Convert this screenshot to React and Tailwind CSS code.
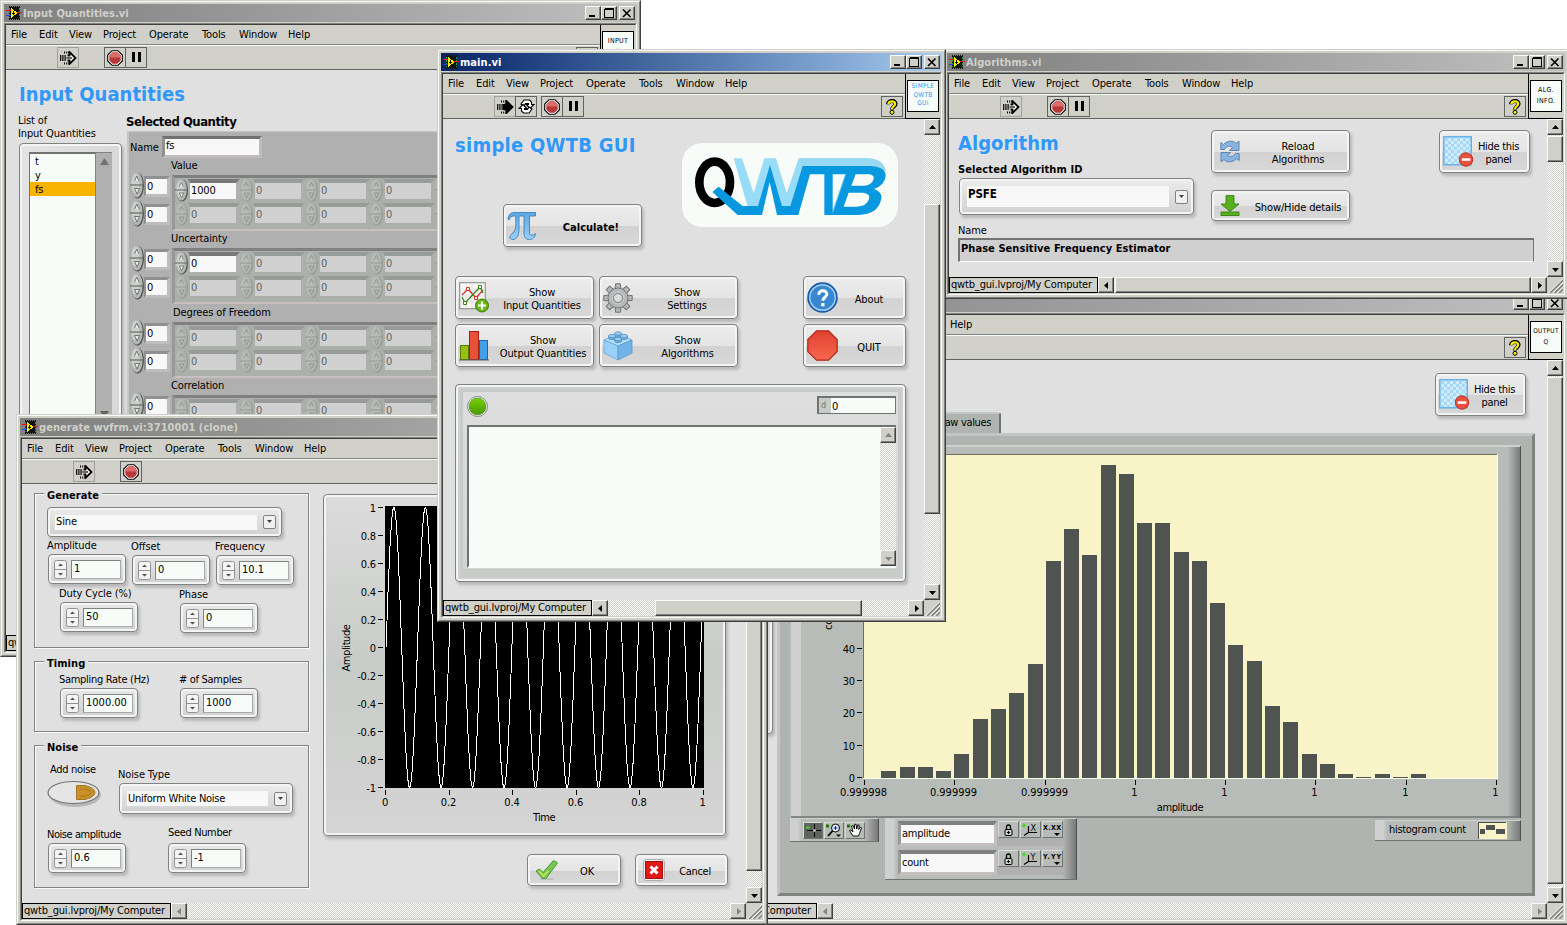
import React from "react";

const cx = (...c) => c.filter(Boolean).join(" ");

/* ---------- icons ---------- */

function ViIcon() {
  return (
    <svg width="16" height="14" viewBox="0 0 16 14" shapeRendering="crispEdges" className="shrink-0">
      <rect x="3" y="1" width="11" height="12" fill="#101410" />
      <path d="M3 .5H14M3 13.500H14" stroke="#101410" strokeDasharray="1 1" />
      <path d="M3.500 2V12M13.500 2V12" stroke="#20a040" strokeDasharray="2 1" />
      <path d="M0 4.500H5" stroke="#f01010" strokeWidth="1" />
      <path d="M0 9.500H5" stroke="#2040f0" strokeWidth="1" />
      <path d="M11 6.500H16" stroke="#f01010" strokeWidth="1" />
      <path d="M5 2L12 7L5 12Z" fill="#f8f000" />
      <path d="M7.500 5V9M6 7.500H9" stroke="#101010" strokeWidth="1" />
    </svg>
  );
}

function RunIcon({ solid }) {
  return (
    <svg width="17" height="14" viewBox="0 0 17 14">
      <path d="M7.500 4.500H9.500V1L15.500 7L9.500 13V9.500H7.500" fill={solid ? "#000" : "#fff"} stroke="#000" strokeWidth="1.800" />
      {solid && <path d="M6 4h5v6h-5z" />}
      {!solid && <path d="M6.500 7H12" stroke="#000" strokeWidth="1.200" />}
      <path d="M.7 4V10M2.900 4V10M5.100 4V10" stroke="#000" strokeWidth="1.200" />
      <path d="M4.500 .5v2M6.700 .5v2M8.800 .5v2M4.500 11.500v2M6.700 11.500v2M8.800 11.500v2" stroke="#000" strokeWidth="1" />
    </svg>
  );
}

function LoopIcon() {
  return (
    <svg width="17" height="15" viewBox="0 0 17 15">
      <g fill="#fff" stroke="#000" strokeWidth="1.100">
        <path d="M3 5L6 1H11.500L13.500 3V5.500H16L12 9.500L8.200 5.500H10.500V4.500H7.500L6 7Z" />
        <path d="M14 10L11 14H5.500L3.500 12V9.500H1L5 5.500L8.800 9.500H6.500V10.500H9.500L11 8Z" />
      </g>
    </svg>
  );
}

function StopIcon() {
  return (
    <svg width="16" height="16" viewBox="0 0 16 16">
      <path d="M5 .7H11L15.300 5V11L11 15.300H5L.7 11V5Z" fill="#fff" stroke="#000" strokeWidth="1.100" />
      <path d="M5.600 2.300H10.400L13.700 5.600V10.400L10.400 13.700H5.600L2.300 10.400V5.600Z" fill="#b83838" />
      <path d="M5.600 2.600H10.400L13.200 5.600V7.500H2.800V5.600Z" fill="#dc6c68" />
    </svg>
  );
}

function PauseIcon() {
  return (
    <svg width="11" height="11" viewBox="0 0 11 11" shapeRendering="crispEdges">
      <path d="M1 0h3v10h-3zM7 0h3v10h-3z" fill="#000" />
    </svg>
  );
}

function HelpIcon() {
  return (
    <svg width="12" height="16" viewBox="0 0 12 16">
      <path d="M2 5.200C2 0.900 9.600 .9 9.600 4.800C9.600 7.600 6 7.400 6 10.500" fill="none" stroke="#000" strokeWidth="4" />
      <path d="M2.400 5C2.600 1.500 9.200 1.500 9.200 4.800C9.200 7.200 6 7.400 6 10.200" fill="none" stroke="#f8f000" strokeWidth="2.200" />
      <circle cx="6" cy="13.300" r="2" fill="#f8f000" stroke="#000" />
    </svg>
  );
}

function PiIcon() {
  return (
    <svg width="30" height="30" viewBox="0 0 30 30">
      <defs>
        <linearGradient id="pi" x1="0" y1="0" x2="0" y2="1">
          <stop offset="0" stopColor="#58a8e8" />
          <stop offset="1" stopColor="#98d0f8" />
        </linearGradient>
      </defs>
      <path
        d="M1 8.500C1.500 3 4 1.500 8 1.500H28.500V5H22.500V21C22.500 25 25 25 28.500 22.500C28 26.500 26 28.500 22.500 28.500C18.500 28.500 17 26 17 22V5H12V18C12 25 9 28.500 6 28.500C4 28.500 2.800 27.500 2.800 26C2.800 24 8.800 21 8.800 15V5H7C4.500 5 3 6 2.500 8.500Z"
        fill="url(#pi)"
        stroke="#3c80b8"
        strokeWidth=".9"
      />
    </svg>
  );
}

function PlotIcon() {
  return (
    <svg width="30" height="31" viewBox="0 0 30 31">
      <rect x=".7" y=".7" width="25.600" height="26" fill="#f8f8f8" stroke="#909490" strokeWidth="1.200" />
      <path d="M7 2V26M13 2V26M19 2V26M2 8H25M2 14H25M2 20H25" stroke="#d4d8d4" strokeWidth=".8" />
      <path d="M3 13L9 7L17 16L24 8" fill="none" stroke="#d83020" strokeWidth="1.300" />
      <path d="M3 15L6 21L21 5L24 11" fill="none" stroke="#388820" strokeWidth="1.300" />
      <path d="M7.500 5.500h3v3h-3zM15.500 14.500h3v3h-3z" fill="#fff" stroke="#d83020" />
      <path d="M4.500 19.500h3v3h-3zM19.500 3.500h3v3h-3z" fill="#fff" stroke="#388820" />
      <circle cx="23" cy="23.500" r="6.500" fill="#68b810" stroke="#387808" />
      <path d="M23 19.500V27.500M19 23.500H27" stroke="#fff" strokeWidth="2.200" />
    </svg>
  );
}

function BarsIcon() {
  return (
    <svg width="30" height="30" viewBox="0 0 30 30">
      <rect x="1.500" y="14.500" width="8" height="14" fill="#98c010" stroke="#587808" />
      <rect x="10.500" y=".5" width="9" height="28" fill="#e85038" stroke="#a82010" />
      <rect x="20.500" y="9.500" width="8" height="19" fill="#40a0e8" stroke="#1868a8" />
      <path d="M0 29H30" stroke="#606460" />
    </svg>
  );
}

function GearIcon() {
  const teeth = [0, 45, 90, 135, 180, 225, 270, 315];
  return (
    <svg width="30" height="30" viewBox="0 0 30 30">
      <g fill="#b4b8b8" stroke="#707474" strokeWidth="1">
        {teeth.map((a) => (
          <path key={a} d="M12 7L12.600 .8H17.400L18 7Z" transform={`rotate(${a} 15 15)`} />
        ))}
        <circle cx="15" cy="15" r="10" />
      </g>
      <circle cx="15" cy="15" r="9.300" fill="#b4b8b8" />
      <circle cx="15" cy="15" r="4.500" fill="#dcdcdc" stroke="#808484" />
      <circle cx="15" cy="15" r="6" fill="none" stroke="#c8cccc" />
    </svg>
  );
}

function BrickIcon() {
  return (
    <svg width="30" height="30" viewBox="0 0 30 30">
      <path d="M1 9L15 3L29 9L15 15Z" fill="#b8e0f8" stroke="#68a8d8" strokeWidth=".8" />
      <path d="M1 9L15 15V29L1 22Z" fill="#98d0f8" stroke="#68a8d8" strokeWidth=".8" />
      <path d="M29 9L15 15V29L29 22Z" fill="#70b4e8" stroke="#5098c8" strokeWidth=".8" />
      {[[15, 2.500], [9, 5], [21, 5], [15, 8]].map(([x, y]) => (
        <g key={`${x}-${y}`} stroke="#5090c8" strokeWidth=".8">
          <path d={`M${x - 3.500} ${y}v2a3.500 1.700 0 0 0 7 0v-2z`} fill="#70b0e0" />
          <ellipse cx={x} cy={y} rx="3.500" ry="1.700" fill="#a0d0f0" />
        </g>
      ))}
    </svg>
  );
}

function AboutIcon() {
  return (
    <svg width="31" height="31" viewBox="0 0 31 31">
      <circle cx="15.500" cy="15.500" r="14.500" fill="#3888d0" stroke="#1858a8" strokeWidth="1.500" />
      <circle cx="15.500" cy="15.500" r="12.700" fill="none" stroke="#b0d8f8" strokeWidth="1.200" />
      <path d="M11.800 12.800C11.800 7.200 20 7.600 19.800 12.200C19.600 15.400 15.800 15.200 15.800 18.800" fill="none" stroke="#fff" strokeWidth="3" />
      <rect x="14.200" y="21" width="3.300" height="3.300" fill="#fff" />
    </svg>
  );
}

function QuitIcon() {
  return (
    <svg width="31" height="31" viewBox="0 0 31 31">
      <defs>
        <linearGradient id="quit" x1="0" y1="0" x2="0" y2="1">
          <stop offset="0" stopColor="#e04030" />
          <stop offset="1" stopColor="#f86850" />
        </linearGradient>
      </defs>
      <path d="M9.500 .8H21.500L30.200 9.500V21.500L21.500 30.200H9.500L.8 21.500V9.500Z" fill="url(#quit)" stroke="#b02818" strokeWidth="1.200" />
    </svg>
  );
}

function ReloadIcon() {
  return (
    <svg width="20" height="23" viewBox="0 0 20 23">
      <g fill="#88b4e0" stroke="#5080b0" strokeWidth=".9">
        <path d="M.8 9.500V2.500L3.500 4.500C7 .5 13 0 16 3.500L19 1V10.500H9.500L12.500 7.500C10 5.500 6.500 6 4.500 9.500Z" />
        <path d="M19.200 13.500V20.500L16.500 18.500C13 22.500 7 23 4 19.500L1 22V12.500H10.500L7.500 15.500C10 17.500 13.500 17 15.500 13.500Z" />
      </g>
    </svg>
  );
}

function DownIcon() {
  return (
    <svg width="20" height="21" viewBox="0 0 20 21">
      <g fill="#58b020" stroke="#388010" strokeWidth=".9">
        <path d="M6 .6H14V9H19L10 16.500L1 9H6Z" />
        <rect x="1" y="17" width="18" height="3.500" />
      </g>
    </svg>
  );
}

function HideIcon() {
  return (
    <svg width="32" height="32" viewBox="0 0 32 32">
      <defs>
        <pattern id="chk" width="6" height="6" patternUnits="userSpaceOnUse" x="2" y="2">
          <rect width="6" height="6" fill="#d0ecfc" />
          <path d="M0 0h3v3h-3zM3 3h3v3h-3z" fill="#a8d8f8" />
        </pattern>
      </defs>
      <rect x=".8" y=".8" width="27.500" height="28" fill="url(#chk)" stroke="#60b0e8" strokeWidth="1.400" />
      <circle cx="23" cy="23.500" r="6.700" fill="#e85040" stroke="#b83020" />
      <rect x="18.700" y="22.300" width="8.600" height="2.500" fill="#fff" />
    </svg>
  );
}

function CheckIcon() {
  return (
    <svg width="24" height="20" viewBox="0 0 24 20">
      <path d="M5 19H18" stroke="#a8aca8" />
      <path d="M1 11L4.500 9L8 12.500L18 1H20L22.500 3L11 18.500H7.500Z" fill="#78c850" stroke="#409030" strokeWidth=".9" />
      <path d="M4 11L8.500 16L13 11" stroke="#d0e860" fill="none" strokeWidth="1.500" />
    </svg>
  );
}

function CancelIcon() {
  return (
    <svg width="22" height="22" viewBox="0 0 22 22">
      <rect x=".5" y=".5" width="21" height="21" rx="2.500" fill="#f0f0f0" stroke="#b0b0b0" />
      <rect x="2.500" y="2.500" width="17" height="17" fill="#e01818" stroke="#a81010" />
      <path d="M7.500 7.500L14.500 14.500M14.500 7.500L7.500 14.500" stroke="#fff" strokeWidth="3" />
    </svg>
  );
}

function Logo() {
  return (
    <svg width="216" height="84" viewBox="738 291 648 252">
      <rect x="738" y="291" width="648" height="252" rx="62" fill="#f8fcf8" />
      <ellipse cx="836" cy="409" rx="46" ry="62" fill="none" stroke="#000" strokeWidth="26" />
      <path d="M893 337H918L953 442L985 337H1020L1052 442L1088 337H1290Q1342 337 1349 375L1300 372H1110L1078 482H1030L1003 398L975 482H935Z" fill="#98dcf8" />
      <path d="M1090 337H1290Q1342 337 1349 375L1300 362H1098Z" fill="#98d8f0" />
      <path
        d="M829 438L848 422L920 480H966L1002 357L1038 480H1063L1100 360H1305Q1350 364 1349 390Q1346 418 1314 429Q1342 440 1335 462Q1325 505 1268 507H1165V385H1122L1087 507H1023L1001 408L978 507H905Z"
        fill="#0898e0"
      />
      <path d="M1190 385H1228L1190 496Z" fill="#f8fcf8" />
      <path d="M1190 500L1229 385" stroke="#98d0f0" strokeWidth="2" />
      <path d="M1259 385H1298Q1318 387 1312 402Q1306 418 1284 419H1246Z" fill="#f8fcf8" />
      <path d="M1238 440H1280Q1304 442 1299 459Q1292 481 1262 482H1223Z" fill="#f8fcf8" />
    </svg>
  );
}

/* ---------- window chrome ---------- */

const raised =
  "border border-t-[#f8fcf8] border-l-[#f8fcf8] border-b-[#404040] border-r-[#404040] shadow-[inset_-1px_-1px_0_#808480] bg-[#d0d0c8]";
const checker = "bg-[repeating-conic-gradient(#f8fcf8_0_25%,#d0d0c8_0_50%)] bg-[length:2px_2px]";

function CaptionButton({ children, className }) {
  return (
    <span className={cx("flex h-[14px] w-4 items-center justify-center", raised, className)}>
      <svg width="10" height="10" viewBox="0 0 10 10" shapeRendering="crispEdges" fill="none" stroke="#000">
        {children}
      </svg>
    </span>
  );
}

const ARROWS = {
  up: "M0 5L3.500 1L7 5Z",
  down: "M0 2L7 2L3.500 6Z",
  left: "M5 0V7L1 3.500Z",
  right: "M2 0V7L6 3.500Z",
};

function ArrowButton({ dir, dim, className }) {
  return (
    <span className={cx("flex h-4 w-4 shrink-0 items-center justify-center", raised, className)}>
      <svg width="7" height="7" viewBox="0 0 7 7">
        <path d={ARROWS[dir]} fill={dim ? "#808480" : "#000"} />
      </svg>
    </span>
  );
}

function VScroll({ thumb, dim }) {
  return (
    <div className={cx("flex w-4 shrink-0 flex-col", checker)}>
      <ArrowButton dir="up" dim={dim} />
      <div className="flex min-h-0 flex-1 flex-col overflow-hidden">
        {thumb && <div className={cx("w-4 shrink-0", raised, thumb)} />}
      </div>
      <ArrowButton dir="down" dim={dim} />
    </div>
  );
}

function StatusBar({ thumb, dim }) {
  return (
    <div className={cx("flex h-4 shrink-0", checker)}>
      <div className="w-[149px] shrink-0 overflow-hidden border border-black bg-[#d0d0c8] pl-[1px] text-[11px] leading-[13px] tracking-[-0.17px] whitespace-nowrap">
        qwtb_gui.lvproj/My Computer
      </div>
      <ArrowButton dir="left" dim={dim} />
      <div className="flex flex-1">{thumb && <div className={cx("h-4", raised, thumb)} />}</div>
      <ArrowButton dir="right" dim={dim} />
      <svg width="16" height="16" viewBox="0 0 16 16" className="shrink-0 bg-[#d0d0c8]">
        <path d="M3 16L16 3M7.500 16L16 7.500M12 16L16 12" stroke="#808480" strokeWidth="1.800" />
        <path d="M1.500 16L16 1.500M6 16L16 6M10.500 16L16 10.500" stroke="#f8fcf8" strokeWidth="1" />
      </svg>
    </div>
  );
}

const MENU = [
  ["File", "w-7"],
  ["Edit", "w-[30px]"],
  ["View", "w-[34px]"],
  ["Project", "w-[46px]"],
  ["Operate", "w-[53px]"],
  ["Tools", "w-[37px]"],
  ["Window", "w-[49px]"],
  ["Help", "w-9"],
];

function ToolButton({ children, className, dim }) {
  return (
    <span className={cx("flex h-[21px] w-[22px] items-center justify-center border", dim ? "border-[#a0a49c]" : "border-[#606460]", className)}>
      {children}
    </span>
  );
}

function Window({ title, active, className, badge, tools, vscroll, status, children }) {
  return (
    <section
      className={cx(
        "absolute border border-t-[#d0d0c8] border-l-[#d0d0c8] border-r-[#404040] border-b-[#404040] bg-[#d0d0c8]",
        className
      )}
    >
      <div className="flex h-full flex-col border border-t-[#f8fcf8] border-l-[#f8fcf8] border-r-[#808480] border-b-[#808480] p-[2px]">
        <header
          className={cx(
            "flex h-[18px] shrink-0 items-center pr-[2px]",
            active ? "bg-linear-to-r from-[#082468] to-[#a8ccf0]" : "bg-linear-to-r from-[#808080] to-[#c0c0c0]"
          )}
        >
          <span className="ml-[2px] flex"><ViIcon /></span>
          <h1
            className={cx(
              "ml-[1px] flex-1 text-[11px] leading-[19px] font-bold tracking-[0.06px] whitespace-nowrap",
              active ? "text-white" : "text-[#d0d0c8]"
            )}
          >
            {title}
          </h1>
          <CaptionButton><path d="M1 8H7" strokeWidth="2" /></CaptionButton>
          <CaptionButton><path d="M.5 1.500H9.500M.5 .5V9.500H9.500V.5H.5" /></CaptionButton>
          <CaptionButton className="ml-[2px]"><path d="M1 1.500L8.500 9M8.500 1.500L1 9" strokeWidth="1.600" shapeRendering="auto" /></CaptionButton>
        </header>
        <div className="mt-[1px] flex min-h-0 flex-1 flex-col border border-t-[#808480] border-l-[#808480] border-r-[#f8fcf8] border-b-[#f8fcf8]">
          <div className="flex min-h-0 flex-1 flex-col border border-t-[#404040] border-l-[#404040] border-r-[#d0d0c8] border-b-[#d0d0c8]">
            <div className="flex h-[45px] shrink-0">
              <div className="flex flex-1 flex-col border-b border-[#606460]">
                <nav className="flex h-5 items-center border-b border-[#808480] pl-[5px] text-[11px] leading-[18px]">
                  {MENU.map(([name, w]) => (
                    <span key={name} className={w}>{name}</span>
                  ))}
                </nav>
                <div className="flex flex-1 items-center border-t border-[#f8fcf8] pr-[2px]">
                  <ToolButton dim className="ml-[51px]"><RunIcon solid={tools.includes("loop")} /></ToolButton>
                  <ToolButton className={cx("-ml-px", !tools.includes("loop") && "invisible")}><LoopIcon /></ToolButton>
                  <ToolButton className="ml-1"><StopIcon /></ToolButton>
                  {tools.includes("pause") && <ToolButton className="-ml-px"><PauseIcon /></ToolButton>}
                  <ToolButton className="ml-auto"><HelpIcon /></ToolButton>
                </div>
              </div>
              <div className="w-[35px] border-b border-l border-black pt-[6px] pl-[1px]">
                <div
                  className={cx(
                    "flex h-8 w-8 flex-col items-center justify-center border border-black bg-[#f8fcf8] font-['DejaVu_Sans'] text-[7px] font-medium tracking-[0.3px] whitespace-nowrap",
                    badge.className
                  )}
                >
                  {badge.lines.map((l) => <span key={l}>{l}</span>)}
                </div>
              </div>
            </div>
            <div className="flex min-h-0 flex-1">
              <div className="min-w-0 flex-1 overflow-hidden bg-[#e0e0e0]">{children}</div>
              {vscroll}
            </div>
            {status}
          </div>
        </div>
      </div>
    </section>
  );
}

/* ---------- controls ---------- */

const frame =
  "rounded-[4px] border-[1.500px] border-[#808480] shadow-[inset_0_0_0_2px_#f4f4f4,2px_3px_3px_#b8b8b8]";

function PanelButton({ icon, children, className, textClass }) {
  return (
    <div
      className={cx(
        "flex items-center bg-[linear-gradient(#ececec,#e4e4e4_52%,#d2d2d2_52%,#d8d8d8)] pl-[3px] text-center text-[11px] leading-[13px]",
        frame,
        className
      )}
    >
      <span className="flex w-8 shrink-0 items-center">{icon}</span>
      <span className={cx("flex-1 pt-[3px] whitespace-pre-line", textClass)}>{children}</span>
    </div>
  );
}

function Select({ value, className, fieldClass }) {
  return (
    <div className={cx("flex items-center justify-between bg-linear-to-b from-[#ececec] to-[#d0d0d0] pr-[5px] pl-[7px]", frame, className)}>
      <div className={cx("mr-[6px] flex h-[15px] flex-1 items-center bg-[#f8f8f8] pt-[1px] pl-[1px] text-[11px]", fieldClass)}>{value}</div>
      <div className="flex h-[14px] w-[13px] items-center justify-center rounded-[2px] border border-[#808480] bg-[#f0f0f0]">
        <svg width="5" height="4" viewBox="0 0 5 4"><path d="M0 0H5L2.500 3Z" fill="#404040" /></svg>
      </div>
    </div>
  );
}

function Spinner() {
  return (
    <svg width="13" height="19" viewBox="0 0 13 19">
      <rect x=".5" y=".5" width="12" height="18" rx="2" fill="#f4f4f4" stroke="#909490" />
      <path d="M1 9.500H12" stroke="#909490" />
      <path d="M4 6L6.500 3.500L9 6ZM4 13L6.500 15.500L9 13Z" fill="#505450" />
    </svg>
  );
}

function Numeric({ label, value, className, labelClass }) {
  return (
    <div className={cx("w-[78px]", className)}>
      <div className={cx("-ml-px text-[11px] leading-[13px] whitespace-nowrap", labelClass)}>{label}</div>
      <div className={cx("mt-[2px] flex h-[30px] items-center bg-linear-to-b from-[#e8e8e8] to-[#d0d0d0] pl-[5px]", frame)}>
        <Spinner />
        <div className="ml-[4px] flex h-[19px] w-[50px] items-center border-t-[1.500px] border-l-[1.500px] border-r border-b border-[#808480] border-r-[#a8aca8] border-b-[#a8aca8] bg-[#f8fcf8] pt-[1px] pl-[2px] text-[11px] tracking-normal">
          {value}
        </div>
      </div>
    </div>
  );
}

function Group({ title, className, children }) {
  return (
    <div className={cx("w-[275px] border border-[#808480] shadow-[1px_1px_0_#f8fcf8,inset_1px_1px_0_#f8fcf8]", className)}>
      <span className="-mt-[5px] -mb-px ml-[9px] block w-fit bg-[#e0e0e0] px-[3px] text-[11px] leading-[14px] font-bold tracking-[0.05px]">{title}</span>
      {children}
    </div>
  );
}

/* ---------- Input Quantities ---------- */

function Knob({ dim, small }) {
  return (
    <svg width={small ? 13 : 14} height={small ? 24 : 28} viewBox="0 0 14 28" preserveAspectRatio="none" className="shrink-0">
      <ellipse cx="7.500" cy="14.500" rx="6.500" ry="13" fill={dim ? "#949894" : "#505450"} />
      <ellipse cx="6.700" cy="13.700" rx="6" ry="12.700" fill={dim ? "#b0b4b0" : "#b4b8b4"} />
      <ellipse cx="5.500" cy="12.500" rx="4" ry="10" fill={dim ? "#b8bcb8" : "#ccd0cc"} />
      <path d="M0 14H13.500" stroke={dim ? "#989c98" : "#686c68"} strokeWidth="1.200" />
      <path d="M4.500 10L6.800 5L9 10M4.500 17.500H9.500L7 23Z" fill={dim ? "#b8bcb8" : "#e8ece8"} stroke={dim ? "#8c908c" : "#707470"} strokeWidth="1" />
    </svg>
  );
}

function IndexControl() {
  return (
    <div className="flex h-7">
      <Knob />
      <div className="mt-[5px] h-[21px] w-[26px] border-2 border-t-[3px] border-r-[3px] border-b-[3px] border-[#909090] border-r-[#c0bcbc] border-b-[#c0bcbc] bg-[#f8f8f8] pl-[1px] text-[11px] leading-[15px]">0</div>
    </div>
  );
}

function Element({ value }) {
  const on = value !== undefined;
  return (
    <div className="flex h-6 w-[65px] shrink-0">
      <Knob dim={!on} small />
      <div
        className={cx(
          "mt-[1px] flex h-[22px] w-[52px] items-center border-t-[4px] border-r-[4px] border-b-2 border-l-2 pt-[1px] pl-[1px] text-[11px]",
          on
            ? "border-[#b0b0b0] border-t-[#787878] bg-[#f8f8f8] text-black"
            : "border-[#acb0ac] border-t-[#989c98] bg-[#d0d0d0] text-[#606460]"
        )}
      >
        {on ? value : "0"}
      </div>
    </div>
  );
}

function ArrayGroup({ label, first, rows = 2, className, labelClass }) {
  const list = Array.from({ length: rows }, (_, i) => i);
  return (
    <div className={className}>
      <div className={cx("h-3 text-[11px] leading-[14px] whitespace-nowrap", labelClass)}>{label}</div>
      <div className="flex">
        <div className="w-[42px]">
          {list.map((r) => <IndexControl key={r} />)}
        </div>
        <div className="mt-1 h-[56px] w-[330px] overflow-hidden border-t-[3px] border-b-2 border-l-[3px] border-t-[#808080] border-b-[#c8c0c0] border-l-[#989898] bg-[#acb0ac]">
          {list.map((r) => (
            <div key={r} className="flex h-6">
              {[0, 1, 2, 3, 4].map((c) => (
                <Element key={c} value={r === 0 && c === 0 ? first : undefined} />
              ))}
            </div>
          ))}
        </div>
      </div>
    </div>
  );
}

function InputWindow() {
  return (
    <Window
      title="Input Quantities.vi"
      className="top-0 left-0 h-[657px] w-[641px]"
      tools={["pause"]}
      badge={{ lines: ["INPUT", "Q"], className: "leading-[11px]" }}
      vscroll={<VScroll thumb="mt-2 h-60" />}
      status={<StatusBar thumb="ml-2 w-60" />}
    >
      <h2 className="pt-3 pl-[13px] text-[20px] leading-[24px] font-bold tracking-[0.03px] text-[#3098f8]">Input Quantities</h2>
      <div className="flex">
        <div className="w-[121px] pt-[8px] pl-3">
          <p className="text-[11px] leading-[13px] whitespace-nowrap">List of<br />Input Quantities</p>
          <div className={cx("mt-[3px] ml-[1px] flex h-[480px] w-[103px] bg-linear-to-r from-[#e4e4e4] to-[#d8d8d8] pt-[8px] pl-[9px]", frame)}>
            <ul className="h-[440px] w-[66px] border-t-2 border-l border-[#707470] bg-[#f8fcf8] text-[11px] leading-[15px]">
              <li className="h-[14px] pl-[5px]">t</li>
              <li className="h-[14px] pl-[5px]">y</li>
              <li className="h-[14px] bg-[#f8b400] pl-[5px]">fs</li>
            </ul>
            <div className="flex h-[263px] w-[17px] flex-col items-center justify-between border-t border-l border-[#808480] bg-[#b0b0b0] pt-[5px]">
              <svg width="9" height="7" viewBox="0 0 9 7"><path d="M0 7L4.500 0L9 7Z" fill="#707470" /></svg>
              <svg width="9" height="4" viewBox="0 0 9 4"><path d="M0 0H9L4.500 7Z" fill="#606460" /></svg>
            </div>
          </div>
        </div>
        <div className="flex-1">
          <h3 className="-ml-px pt-[8px] text-[13px] leading-[15px] font-bold tracking-[-0.48px] whitespace-nowrap">Selected Quantity</h3>
          <div className="mt-[2px] h-[480px] border-t border-l-2 border-[#c8c4c4] bg-[#b0b0b0]">
            <div className="flex h-[27px] items-center pt-[2px] pl-[1px] text-[11px]">
              <span className="w-8 pt-[4px]">Name</span>
              <span className="flex h-[22px] w-[100px] items-center border-[3px] border-t-[#707070] border-r-[#c0bcbc] border-b-[#c0bcbc] border-l-[#909090] bg-[#f8f8f8] pl-[1px]">fs</span>
            </div>
            <div className="pl-[1px]">
              <ArrayGroup label="Value" labelClass="pl-[41px]" first="1000" className="h-[73px]" />
              <ArrayGroup label="Uncertainty" labelClass="pl-[41px]" first="0" className="h-[74px]" />
              <ArrayGroup label="Degrees of Freedom" labelClass="pl-[43px]" className="h-[73px]" />
              <ArrayGroup label="Correlation" labelClass="pl-[41px]" rows={1} className="h-[74px]" />
            </div>
          </div>
        </div>
      </div>
    </Window>
  );
}

/* ---------- main ---------- */

function MainWindow() {
  return (
    <Window
      active
      title="main.vi"
      className="top-[49px] left-[437px] h-[573px] w-[509px]"
      tools={["loop", "pause"]}
      badge={{ lines: ["SIMPLE", "QWTB", "GUI"], className: "text-[#3098f8] text-[6.500px]! leading-[8.500px] pb-[2px]" }}
      vscroll={<VScroll thumb="mt-[69px] h-[310px]" />}
      status={<StatusBar thumb="ml-[47px] w-[207px]" />}
    >
      <div className="flex h-[128px]">
        <div className="w-[239px] pt-[14px] pl-3">
          <h2 className="text-[20px] leading-[24px] font-bold tracking-[0.27px] whitespace-nowrap text-[#3098f8]">simple QWTB GUI</h2>
          <PanelButton icon={<PiIcon />} className="mt-[47px] ml-[48px] h-[43px] w-[139px]" textClass="font-bold tracking-normal pl-[2px]">Calculate!</PanelButton>
        </div>
        <div className="pt-6"><Logo /></div>
      </div>
      <div className="mt-[29px] ml-3 grid grid-cols-[139px_139px_103px] gap-x-[5px] gap-y-[5px]">
        <PanelButton icon={<PlotIcon />} className="h-[43px]">{"Show\nInput Quantities"}</PanelButton>
        <PanelButton icon={<GearIcon />} className="h-[43px]" textClass="pl-[2px]">{"Show\nSettings"}</PanelButton>
        <PanelButton icon={<AboutIcon />} className="ml-[60px] h-[43px] w-[103px]" textClass="pr-[6px]">About</PanelButton>
        <PanelButton icon={<BarsIcon />} className="h-[43px]" textClass="pl-[2px]">{"Show\nOutput Quantities"}</PanelButton>
        <PanelButton icon={<BrickIcon />} className="h-[43px]" textClass="pl-[3px]">{"Show\nAlgorithms"}</PanelButton>
        <PanelButton icon={<QuitIcon />} className="ml-[60px] h-[43px] w-[103px]" textClass="pr-[6px]">QUIT</PanelButton>
      </div>
      <div className={cx("mt-[17px] ml-3 h-[198px] w-[451px] bg-[#d0d0d0] p-[4px]", frame)}>
        <div className="h-full border-[3px] border-b-[8px] border-[#c8ccc8] bg-linear-to-b from-[#dedede] to-[#d4d4d4] pt-[4px] pr-[2px] pl-[4px]">
          <div className="flex h-[29px] justify-between">
            <svg width="22" height="22" viewBox="0 0 22 22">
              <defs>
                <linearGradient id="led" x1="0" y1="0" x2="0" y2="1">
                  <stop offset="0" stopColor="#78d000" />
                  <stop offset="1" stopColor="#489800" />
                </linearGradient>
              </defs>
              <circle cx="10.500" cy="10.500" r="10" fill="#f8fcf8" stroke="#808480" />
              <circle cx="10.500" cy="10.500" r="8.500" fill="url(#led)" stroke="#508830" strokeWidth=".6" />
            </svg>
            <div className="flex h-[18px] w-[79px] border border-t-2 border-l-2 border-[#707470] bg-[#f8fcf8] text-[11px] leading-[17px]">
              <span className="w-3 bg-[#c8ccc8] pl-[2px] text-[9px] leading-[14px] text-[#707470]">d</span>
              <span className="pl-[1px]">0</span>
            </div>
          </div>
          <div className="flex h-[143px] border-t-2 border-b-2 border-l-2 border-[#707470] border-b-[#f8fcf8] bg-[#f8fcf8]">
            <div className="flex-1" />
            <VScroll dim />
          </div>
        </div>
      </div>
    </Window>
  );
}

/* ---------- Algorithms ---------- */

function AlgorithmsWindow() {
  return (
    <Window
      title="Algorithms.vi"
      className="top-[49px] left-[943px] h-[250px] w-[626px]"
      tools={["pause"]}
      badge={{ lines: ["ALG.", "INFO."], className: "leading-[11px]" }}
      vscroll={<VScroll thumb="mt-[1px] h-[26px]" />}
      status={<StatusBar thumb="ml-[1px] w-[416px]" />}
    >
      <div className="flex h-[113px]">
        <div className="w-[262px] pt-3 pl-[9px]">
          <h2 className="text-[20px] leading-[24px] font-bold tracking-[0.03px] text-[#3098f8]">Algorithm</h2>
          <p className="mt-[8px] text-[11px] leading-[14px] font-bold tracking-[0.1px]">Selected Algorithm ID</p>
          <Select value="PSFE" className="mt-[1px] ml-[1px] h-[37px] w-[235px]" fieldClass="h-[21px] text-[11.500px]! font-bold pb-[4px]" />
        </div>
        <div className="pt-[11px]">
          <PanelButton icon={<span className="flex pl-[5px]"><ReloadIcon /></span>} className="h-[43px] w-[139px]">{"Reload\nAlgorithms"}</PanelButton>
          <PanelButton icon={<span className="flex pl-[5px]"><DownIcon /></span>} className="mt-[17px] h-[31px] w-[139px]">Show/Hide details</PanelButton>
        </div>
        <PanelButton icon={<HideIcon />} className="mt-[11px] ml-[89px] h-[43px] w-[91px]" textClass="pr-[7px] tracking-[-0.3px]">{"Hide this\npanel"}</PanelButton>
      </div>
      <p className="-mt-[8px] pl-[9px] text-[11px] leading-[13px]">Name</p>
      <div className="mt-[1px] ml-[9px] h-6 w-[576px] border-t-2 border-r border-b border-l-2 border-[#707470] border-b-[#f8fcf8] bg-[#d0d0d0] pl-[1px] text-[11px] leading-[17px] font-bold tracking-[0.06px]">
        Phase Sensitive Frequency Estimator
      </div>
    </Window>
  );
}

/* ---------- Output ---------- */

const BARS = [
  [881, 771], [900, 767], [918, 767], [936, 771], [954, 754], [973, 719], [991, 709], [1009, 693], [1028, 664],
  [1046, 561], [1064, 529], [1082, 555], [1101, 465], [1119, 474], [1137, 523], [1155, 523], [1174, 552],
  [1192, 561], [1210, 603], [1228, 645], [1247, 661], [1265, 706], [1283, 722], [1302, 754], [1320, 764],
  [1338, 774], [1356, 777], [1375, 774], [1393, 777], [1411, 774],
];
const XT = [
  [864, "0.999998"], [954, "0.999999"], [1045, "0.999999"], [1135, "1"], [1225, "1"], [1315, "1"], [1406, "1"], [1496, "1"],
];

function Histogram() {
  return (
    <svg width="731" height="373" viewBox="790 445 731 373" className="block text-[11px]">
      <defs>
        <linearGradient id="edge">
          <stop offset="0" stopColor="#b8bcb8" />
          <stop offset="1" stopColor="#787878" />
        </linearGradient>
      </defs>
      <rect x="790" y="445" width="731" height="373" fill="#b8bcb8" />
      <rect x="791" y="447" width="10" height="370" fill="#d0d0d0" />
      <rect x="1508" y="447" width="12" height="370" fill="url(#edge)" />
      <path d="M790 446H1521" stroke="#d0d0d0" strokeWidth="2" />
      <path d="M791 817H1521" stroke="#707470" strokeWidth="1.500" />
      <path d="M1520.500 446V818" stroke="#505450" />
      <rect x="863" y="454" width="635" height="325" fill="#f8fce8" />
      <rect x="864" y="455" width="633" height="323" fill="#f8f4c8" />
      <path d="M863.500 778V454.500H1497" fill="none" stroke="#707060" />
      <g fill="#505450" shapeRendering="crispEdges">
        {BARS.map(([x, y]) => (
          <rect key={x} x={x} y={y} width="15" height={778 - y} />
        ))}
      </g>
      <g stroke="#000" shapeRendering="crispEdges">
        {[0, 1, 2, 3, 4].map((i) => (
          <path key={i} d={`M857 ${777.500 - i * 32.300}h5`} />
        ))}
        {XT.map(([x]) => (
          <path key={x} d={`M${x + 0.5} 780v5`} />
        ))}
      </g>
      {[0, 1, 2, 3, 4].map((i) => (
        <text key={i} x="855" y={782 - i * 32.300} textAnchor="end">{i * 10}</text>
      ))}
      {XT.map(([x, t]) => (
        <text key={x} x={x - 0.5} y="796" textAnchor="middle" letterSpacing="0">{t}</text>
      ))}
      <text x="1180" y="811" textAnchor="middle" letterSpacing="-.4">amplitude</text>
      <text transform="translate(832 630) rotate(-90)">count</text>
    </svg>
  );
}

function MiniButton({ children, className }) {
  return (
    <span className={cx("flex h-[17px] w-[21px] items-center justify-center border border-t-[#d8dcd8] border-l-[#d8dcd8] border-r-[#707470] border-b-[#707470] bg-[#b8bcb8]", className)}>
      {children}
    </span>
  );
}

function AxisRow({ name, letter }) {
  return (
    <div className="flex h-[29px]">
      <div className="flex h-[25px] w-[99px] items-center border-t-[4px] border-r-[3px] border-b-[3px] border-l-[3px] border-t-[#808080] border-r-[#c4c0c0] border-b-[#c4c0c0] border-l-[#989898] bg-[#f8f8f8] pl-[1px] text-[11px] tracking-[-0.25px]">
        {name}
      </div>
      <div className="flex h-[25px] gap-[1px] bg-[#b0b0b0] pr-[1px] pl-[1px]">
        <MiniButton>
          <svg width="9" height="12" viewBox="0 0 9 12">
            <path d="M2.500 6V3Q2.500 1 4.500 1Q6.500 1 6.500 3V6" fill="none" stroke="#000" strokeWidth="1.300" />
            <rect x="1" y="5.500" width="7" height="6" rx="1" fill="#c8ccc8" stroke="#000" />
            <path d="M4.500 7V10M3 8.500H6" stroke="#000" />
          </svg>
        </MiniButton>
        <MiniButton>
          <svg width="17" height="13" viewBox="0 0 17 13">
            <path d="M0 2.500H4M2 .5V4.500" stroke="#40e010" strokeWidth="1.500" />
            <path d="M6.500 3V9.500H15M6.500 9.500L2 12.500" fill="none" stroke="#000" strokeWidth="1.200" />
            <text x="8.500" y="8" fontSize="9">{letter}</text>
          </svg>
        </MiniButton>
        <MiniButton>
          <svg width="19" height="14" viewBox="0 0 19 14">
            <text x="0" y="7" fontSize="7" fontWeight="bold" textLength="18">{`${letter}.${letter}${letter}`}</text>
            <path d="M11 10H17L14 13Z" />
          </svg>
        </MiniButton>
      </div>
    </div>
  );
}

const strip = "border-t border-b border-t-[#d0d0d0] border-b-[#707470] border-r border-r-[#505450] bg-[linear-gradient(90deg,#d0d0d0_0,#d0d0d0_8px,#b8bcb8_12px,#b8bcb8_calc(100%-14px),#787878)]";

function OutputWindow() {
  return (
    <Window
      title=""
      className="top-[290px] left-[662px] h-[635px] w-[907px]"
      tools={["pause"]}
      badge={{ lines: ["OUTPUT", "Q"], className: "leading-[11px] text-[6.500px]!" }}
      vscroll={<VScroll thumb="mt-[1px] h-[507px]" />}
      status={<StatusBar dim />}
    >
      <div className="flex">
        <div className={cx("mt-[100px] h-[274px] w-[105px] shrink-0 bg-[#d8d8d8]", frame)} />
        <div className="ml-1">
          <div className="flex h-[73px] items-end justify-between">
            <div className="flex h-[21px] w-[224px] items-center justify-end rounded-t-[3px] border-t-2 border-r-2 border-t-[#c4c8c4] border-r-[#707470] bg-[#b0b4b0] pr-[8px] text-[11px] tracking-[-0.35px]">
              Raw values
            </div>
            <PanelButton icon={<HideIcon />} className="mr-[9px] mb-[17px] h-[43px] w-[91px]" textClass="pr-[7px] tracking-[-0.3px]">{"Hide this\npanel"}</PanelButton>
          </div>
          <div className="h-[463px] w-[758px] border-[3px] border-t-[#c4c4c4] border-r-[#808480] border-b-[#808480] border-l-[#c4c4c4] bg-[#b0b4b0] pt-[9px] pl-[10px]">
            <Histogram />
            <div className="flex h-[62px] w-[731px] items-start">
              <div className={cx("flex h-6 w-[89px] items-center gap-0 pl-[13px]", strip)}>
                <MiniButton className="w-[20px]! bg-[#606460]!">
                  <svg width="17" height="13" viewBox="0 0 17 13">
                    <path d="M2 6.500H16M9.500 0V13" stroke="#000" />
                    <path d="M1 3.500H5M3 1.500V5.500" stroke="#40e010" />
                    <circle cx="9.500" cy="6.500" r="1.300" fill="#d8d8d8" />
                  </svg>
                </MiniButton>
                <MiniButton className="ml-[1px] w-[20px]!">
                  <svg width="16" height="14" viewBox="0 0 16 14">
                    <circle cx="9.500" cy="5" r="4" fill="#e8f0ff" stroke="#000" />
                    <path d="M7.500 5H11.500M9.500 3V7" stroke="#1020a0" />
                    <path d="M6.500 8L2 13" stroke="#000" strokeWidth="1.800" />
                    <path d="M10 11.500H15L12.500 14Z" />
                    <rect x="0" y="1.500" width="3" height="3" fill="#287010" />
                  </svg>
                </MiniButton>
                <MiniButton className="ml-[1px] w-[20px]!">
                  <svg width="16" height="14" viewBox="0 0 16 14">
                    <path d="M6 13L2.500 7.500L4 7L6 9L4.500 3L6 2.500L7.500 6V1.500L9 1.200L9.800 6L10.800 1.800L12.200 2.200L11.800 6.500L13.500 4L14.500 5L12.500 10.500L11.500 13Z" fill="#f8fcf8" stroke="#000" strokeWidth=".9" />
                    <rect x="0" y="1.500" width="3" height="3" fill="#287010" />
                  </svg>
                </MiniButton>
              </div>
              <div className={cx("ml-[6px] h-[62px] w-[192px] pt-[2px] pl-[13px]", strip)}>
                <AxisRow name="amplitude" letter="X" />
                <AxisRow name="count" letter="Y" />
              </div>
              <div className={cx("mt-[2px] ml-auto flex h-[21px] w-[146px] items-center pl-[14px] text-[11px]", strip)}>
                <span className="w-[89px] tracking-[-0.3px] whitespace-nowrap">histogram count</span>
                <svg width="29" height="17" viewBox="0 0 29 17">
                  <rect width="29" height="17" fill="#f8f4c8" />
                  <path d="M.5 17V.5H28" fill="none" stroke="#505450" />
                  <path d="M2 7h5v5h-5zM8 3h9v5h-9zM18 7h9v5h-9z" fill="#505450" />
                </svg>
              </div>
            </div>
          </div>
        </div>
      </div>
    </Window>
  );
}

/* ---------- generate wvfrm ---------- */

function SinePlot() {
  const pts = [];
  for (let i = 0; i <= 1000; i++) {
    const t = i / 1000;
    pts.push(`${(385 + t * 318).toFixed(1)},${(647.5 - 140 * Math.sin(2 * Math.PI * 10.1 * t)).toFixed(1)}`);
  }
  return (
    <svg width="400" height="339" viewBox="323 495 400 339" className="block text-[11px]">
      <rect x="384" y="506" width="319" height="282" fill="#000" />
      <polyline points={pts.join(" ")} fill="none" stroke="#fff" shapeRendering="crispEdges" />
      {["1", "0.8", "0.6", "0.4", "0.2", "0", "-0.2", "-0.4", "-0.6", "-0.8", "-1"].map((t, i) => (
        <g key={t}>
          <path d={`M377 ${507.500 + i * 28}h5`} stroke="#000" shapeRendering="crispEdges" />
          <text x="375" y={512 + i * 28} textAnchor="end">{t}</text>
        </g>
      ))}
      {["0", "0.2", "0.4", "0.6", "0.8", "1"].map((t, i) => (
        <g key={t}>
          <path d={`M${384.500 + i * 63.500} 790v5`} stroke="#000" shapeRendering="crispEdges" />
          <text x={384 + i * 63.500} y="806" textAnchor="middle">{t}</text>
        </g>
      ))}
      <text x="543" y="821" textAnchor="middle" letterSpacing="-.5">Time</text>
      <text transform="translate(349 648) rotate(-90)" textAnchor="middle" letterSpacing="-.4">Amplitude</text>
    </svg>
  );
}

function GenerateWindow() {
  return (
    <Window
      title="generate wvfrm.vi:3710001 (clone)"
      className="top-[414px] left-4 h-[511px] w-[752px]"
      tools={[]}
      badge={{ lines: [], className: "" }}
      vscroll={<VScroll thumb="mt-[1px] h-[370px]" />}
      status={<StatusBar dim />}
    >
      <div className="flex pl-3">
        <div className="pt-[9px]">
          <Group title="Generate" className="h-[155px]">
            <Select value="Sine" className="mt-[5px] ml-3 h-[30px] w-[235px]" />
            <div className="mt-[2px] flex gap-[6px] pl-[13px]">
              <Numeric label="Amplitude" value="1" />
              <Numeric label="Offset" value="0" className="pt-[1px]" />
              <Numeric label="Frequency" value="10.1" className="pt-[1px]" />
            </div>
            <div className="mt-[2px] flex pl-[25px]">
              <Numeric label="Duty Cycle (%)" value="50" />
              <Numeric label="Phase" value="0" className="ml-[42px] pt-[1px]" />
            </div>
          </Group>
          <Group title="Timing" className="mt-[13px] h-[71px]">
            <div className="mt-[3px] flex pl-[25px]">
              <Numeric label="Sampling Rate (Hz)" value="1000.00" labelClass="tracking-[-0.3px]" />
              <Numeric label="# of Samples" value="1000" className="ml-[42px]" labelClass="tracking-[-0.3px]" />
            </div>
          </Group>
          <Group title="Noise" className="mt-[13px] h-[143px]">
            <div className="mt-[9px] flex pl-3">
              <div className="w-[72px] text-[11px] leading-[13px]">
                <span className="block pl-[3px] tracking-[-0.3px] whitespace-nowrap">Add noise</span>
                <svg width="56" height="28" viewBox="0 0 56 28" className="mt-[4px]">
                  <ellipse cx="28" cy="15" rx="26" ry="12" fill="#b8b8b8" />
                  <ellipse cx="26.500" cy="12.500" rx="25.500" ry="11" fill="#e4e4e4" stroke="#707470" strokeWidth="1.200" />
                  <path d="M29.500 5.500H38Q48 8 48 12.500Q48 17 38 19.500H29.500Z" fill="#c89028" stroke="#a07828" />
                  <path d="M33 9H38Q44 10.500 44 12.500Q44 14.500 38 16H33" fill="none" stroke="#a87820" />
                </svg>
              </div>
              <div className="pt-[5px]">
                <span className="-ml-px block text-[11px] leading-[13px]">Noise Type</span>
                <Select value="Uniform White Noise" className="mt-[2px] h-[31px] w-[174px] tracking-[-0.25px]" />
              </div>
            </div>
            <div className="mt-[12px] flex pl-[13px]">
              <Numeric label="Noise amplitude" value="0.6" className="pt-[2px]" labelClass="tracking-[-0.45px]" />
              <Numeric label="Seed Number" value="-1" className="ml-[42px]" labelClass="mb-[4px] ml-0! tracking-[-0.35px]" />
            </div>
          </Group>
        </div>
        <div className="ml-[14px] pt-[10px]">
          <div className={cx("h-[342px] w-[403px] bg-linear-to-b from-[#dcdcdc] via-[#c8ccc8] to-[#d4d4d4]", frame)}>
            <SinePlot />
          </div>
          <div className="mt-[18px] ml-[204px] flex gap-[14px]">
            <PanelButton icon={<span className="flex pl-1"><CheckIcon /></span>} className="h-8 w-[94px]" textClass="pr-[9px]">OK</PanelButton>
            <PanelButton icon={<span className="flex pl-1"><CancelIcon /></span>} className="h-8 w-[93px]" textClass="pr-[8px] tracking-[-0.3px]">Cancel</PanelButton>
          </div>
        </div>
      </div>
    </Window>
  );
}

export default function App() {
  return (
    <main className="relative h-[925px] w-[1567px] overflow-hidden bg-white font-['DejaVu_Sans_Condensed','DejaVu_Sans',sans-serif] tracking-[-0.12px] text-black [font-stretch:condensed]">
      <InputWindow />
      <OutputWindow />
      <GenerateWindow />
      <AlgorithmsWindow />
      <MainWindow />
    </main>
  );
}
